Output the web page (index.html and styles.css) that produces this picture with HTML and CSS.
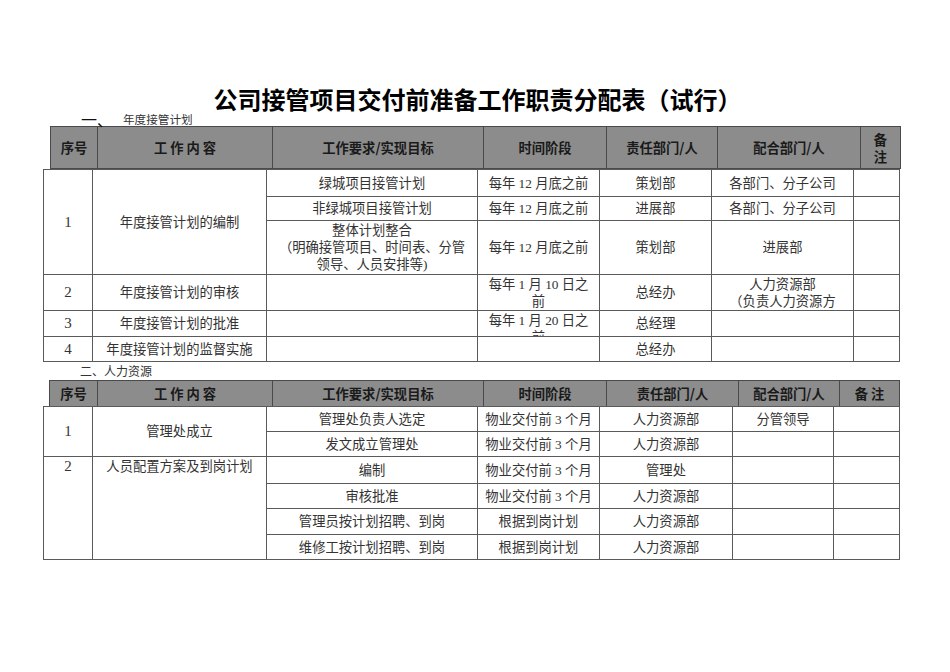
FILE: index.html
```html
<!DOCTYPE html>
<html lang="zh">
<head>
<meta charset="utf-8">
<title>公司接管项目交付前准备工作职责分配表（试行）</title>
<link rel="stylesheet" href="styles.css">
</head>
<body>
<div class="page">
  <h1 class="title">公司接管项目交付前准备工作职责分配表（试行）</h1>
  <div class="sec sec1"><span class="num">一、</span><span class="lbl">年度接管计划</span></div>
  <table class="hd hd1">
    <colgroup><col class="w47"><col class="w175"><col class="w211"><col class="w123"><col class="w111"><col class="w143"><col class="w40"></colgroup>
    <tr class="h42"><th>序号</th><th>工 作 内 容</th><th>工作要求/实现目标</th><th>时间阶段</th><th>责任部门/人</th><th>配合部门/人</th><th>备<br>注</th></tr>
  </table>
  <table class="bd bd1">
    <colgroup><col class="w49"><col class="w174"><col class="w211"><col class="w122"><col class="w112"><col class="w142"><col class="w46"></colgroup>
    <tr class="h27"><td rowspan="3" class="num-cell">1</td><td rowspan="3">年度接管计划的编制</td><td>绿城项目接管计划</td><td>每年 12 月底之前</td><td>策划部</td><td>各部门、分子公司</td><td></td></tr>
    <tr class="h24"><td>非绿城项目接管计划</td><td>每年 12 月底之前</td><td>进展部</td><td>各部门、分子公司</td><td></td></tr>
    <tr class="h54"><td>整体计划整合<br>（明确接管项目、时间表、分管<br>领导、人员安排等)</td><td>每年 12 月底之前</td><td>策划部</td><td>进展部</td><td></td></tr>
    <tr class="h36"><td class="num-cell">2</td><td>年度接管计划的审核</td><td></td><td class="top"><div class="clip c35">每年 1 月 10 日之<br>前</div></td><td>总经办</td><td class="top"><div class="clip c35">人力资源部<br>（负责人力资源方<br>面审核）</div></td><td></td></tr>
    <tr class="h25"><td class="num-cell">3</td><td>年度接管计划的批准</td><td></td><td class="top"><div class="clip c24">每年 1 月 20 日之<br>前</div></td><td>总经理</td><td></td><td></td></tr>
    <tr class="h25"><td class="num-cell">4</td><td>年度接管计划的监督实施</td><td></td><td></td><td>总经办</td><td></td><td></td></tr>
  </table>
  <div class="sec sec2">二、人力资源</div>
  <table class="hd hd2">
    <colgroup><col class="w48"><col class="w175"><col class="w211"><col class="w123"><col class="w132"><col class="w101"><col class="w60"></colgroup>
    <tr class="h26"><th>序号</th><th>工 作 内 容</th><th>工作要求/实现目标</th><th>时间阶段</th><th>责任部门/人</th><th>配合部门/人</th><th>备 注</th></tr>
  </table>
  <table class="bd bd2">
    <colgroup><col class="w49"><col class="w174"><col class="w211"><col class="w122"><col class="w133"><col class="w101"><col class="w66"></colgroup>
    <tr class="h25"><td rowspan="2" class="num-cell">1</td><td rowspan="2">管理处成立</td><td>管理处负责人选定</td><td>物业交付前 3 个月</td><td>人力资源部</td><td>分管领导</td><td></td></tr>
    <tr class="h25"><td>发文成立管理处</td><td>物业交付前 3 个月</td><td>人力资源部</td><td></td><td></td></tr>
    <tr class="h27"><td rowspan="4" class="top num-cell">2</td><td rowspan="4" class="top">人员配置方案及到岗计划</td><td>编制</td><td>物业交付前 3 个月</td><td>管理处</td><td></td><td></td></tr>
    <tr class="h25"><td>审核批准</td><td>物业交付前 3 个月</td><td>人力资源部</td><td></td><td></td></tr>
    <tr class="h26"><td>管理员按计划招聘、到岗</td><td>根据到岗计划</td><td>人力资源部</td><td></td><td></td></tr>
    <tr class="h25"><td>维修工按计划招聘、到岗</td><td>根据到岗计划</td><td>人力资源部</td><td></td><td></td></tr>
  </table>
</div>
</body>
</html>
```
FILE: styles.css
```css
html, body {
  margin: 0;
  padding: 0;
  background: #ffffff;
}

.page {
  padding-top: 86px;
  font-family: "Liberation Serif", "Noto Sans CJK SC", serif;
  color: #333333;
}

.title {
  margin: 0;
  padding-left: 5px;
  text-align: center;
  font-family: "Noto Sans CJK SC", sans-serif;
  font-weight: bold;
  font-size: 24px;
  line-height: 26px;
  color: #000000;
}

.sec {
  display: flex;
  align-items: center;
  font-family: "Noto Sans CJK SC", sans-serif;
}

.sec1 {
  height: 14px;
  padding-left: 81px;
}

.sec1 .num {
  font-size: 16px;
  line-height: 14px;
  color: #111111;
}

.sec1 .lbl {
  margin-left: 10px;
  font-size: 11.6px;
  line-height: 14px;
  color: #333333;
}

.sec2 {
  height: 18px;
  padding-left: 80px;
  font-size: 12px;
  line-height: 18px;
  color: #333333;
}

table {
  border-collapse: collapse;
  table-layout: fixed;
}

.hd1 { margin-left: 50px; width: 850px; }
.bd1 { margin-left: 43px; width: 856px; }
.hd2 { margin-left: 49px; width: 850px; }
.bd2 { margin-left: 43px; width: 856px; margin-top: -1px; }

.w40 { width: 40px; }
.w46 { width: 46px; }
.w47 { width: 47px; }
.w48 { width: 48px; }
.w49 { width: 49px; }
.w60 { width: 60px; }
.w66 { width: 66px; }
.w101 { width: 101px; }
.w111 { width: 111px; }
.w112 { width: 112px; }
.w122 { width: 122px; }
.w123 { width: 123px; }
.w132 { width: 132px; }
.w133 { width: 133px; }
.w142 { width: 142px; }
.w143 { width: 143px; }
.w174 { width: 174px; }
.w175 { width: 175px; }
.w211 { width: 211px; }

.h24 { height: 24px; }
.h25 { height: 25px; }
.h26 { height: 26px; }
.h27 { height: 27px; }
.h36 { height: 36px; }
.h42 { height: 42px; }
.h54 { height: 54px; }

th {
  background: #8c8c8c;
  border: 1px solid #4a4a4a;
  padding: 0 4px;
  font-family: "Noto Sans CJK SC", sans-serif;
  font-weight: bold;
  font-size: 13.3px;
  line-height: 17px;
  color: #1a1a1a;
  text-align: center;
  vertical-align: middle;
}

td {
  border: 1px solid #5a5a5a;
  padding: 0 3px;
  font-size: 13.3px;
  line-height: 17px;
  color: #333333;
  text-align: center;
  vertical-align: middle;
  overflow: hidden;
}

td.num-cell {
  font-size: 15px;
}

td.top {
  vertical-align: top;
  padding-top: 1px;
}

.clip {
  overflow: hidden;
}

.c35 { height: 34px; }
.c24 { height: 24px; }
```
